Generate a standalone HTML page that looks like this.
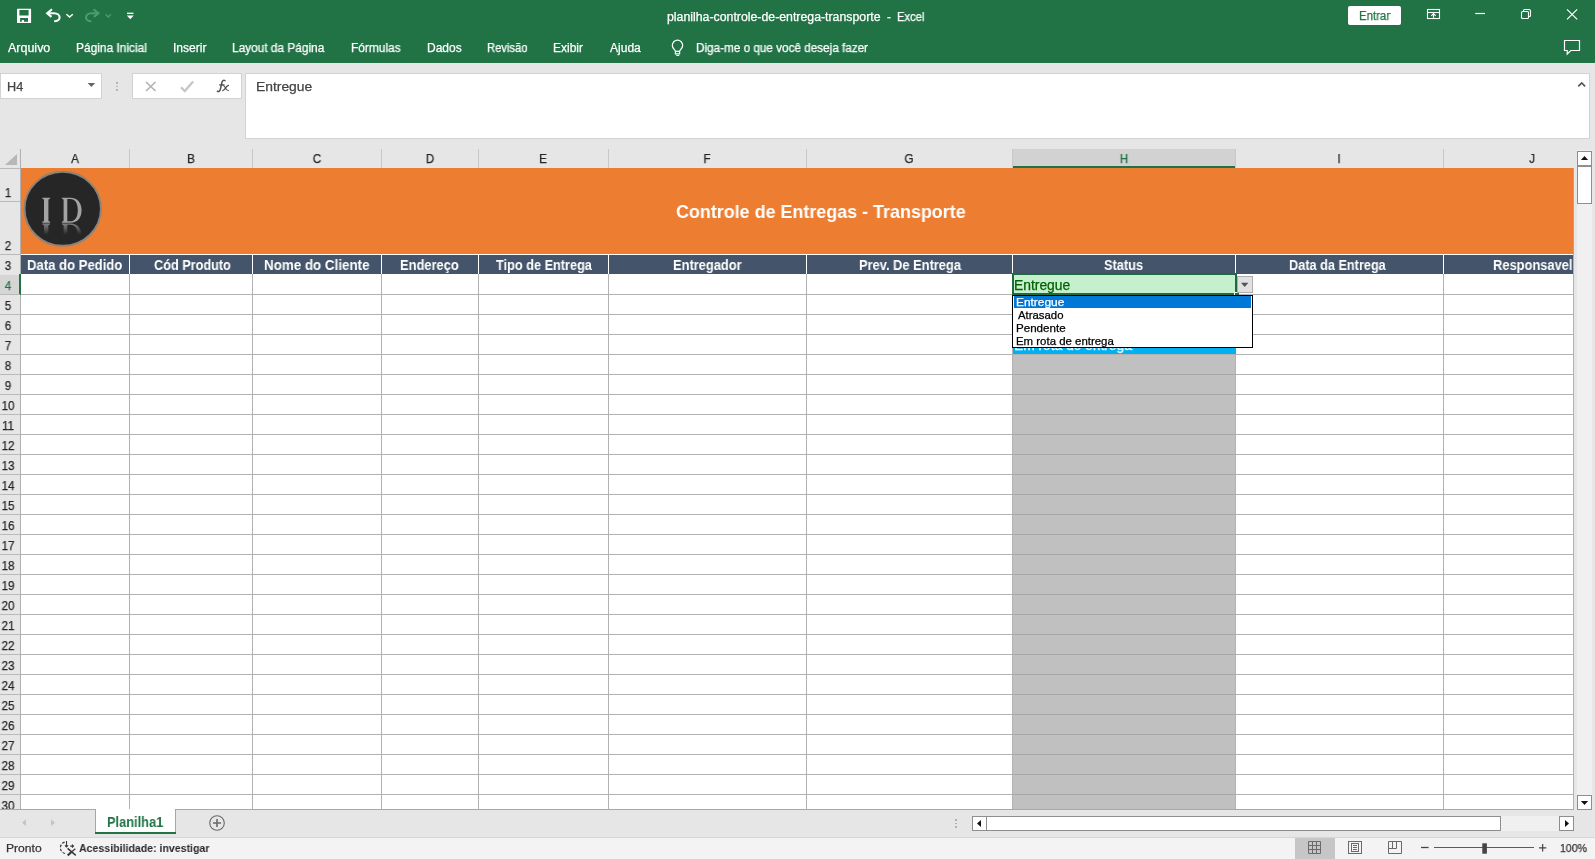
<!DOCTYPE html>
<html><head><meta charset="utf-8"><title>Excel</title>
<style>
*{box-sizing:border-box;margin:0;padding:0}
html,body{width:1595px;height:859px;overflow:hidden;background:#e6e6e6;font-family:"Liberation Sans",sans-serif;}
.a{position:absolute}
.t{position:absolute;white-space:pre;line-height:1;transform-origin:0 0;will-change:transform;-webkit-text-stroke:.25px currentColor}
svg{position:absolute;overflow:visible}
</style></head><body>
<div class="a" style="left:0;top:0;width:1595px;height:63px;background:#217346"></div>

<div class="t" style="left:666.5px;top:10px;line-height:14px;font-size:12px;color:#fff;transform:scaleX(1.026)">planilha-controle-de-entrega-transporte</div>
<div class="t" style="left:886.6px;top:10px;line-height:14px;font-size:12px;color:#fff;transform:scaleX(0.950)">-</div>
<div class="t" style="left:896.6px;top:10px;line-height:14px;font-size:12px;color:#fff;transform:scaleX(0.936)">Excel</div>
<div class="a" style="left:1348px;top:6px;width:53px;height:19px;background:#fff;border-radius:2px"></div>
<div class="t" style="left:1358.5px;top:9px;line-height:14px;font-size:12.3px;color:#217346;transform:scaleX(0.927)">Entrar</div>
<svg style="left:0;top:0" width="160" height="32" viewBox="0 0 160 32" fill="none" stroke="#fff" stroke-width="1.5">
<path d="M17.500 8.700h13.100a.500 .500 0 0 1 .500 .500v13.400a.500 .500 0 0 1-.500 .500h-13.100a.500 .500 0 0 1-.500-.500v-13.400a.500 .500 0 0 1 .500-.500z M19.400 10.100v5.500h9.200v-5.500z M20.100 18v3.800h1.700v-1.800h2.200v1.800h4v-3.800z" fill="#fff" fill-rule="evenodd" stroke="none"/>
<path d="M47.500 13.200h6.500c3.500 0 5.600 2 5.600 4.200s-2.200 3.800-5.400 3.800" stroke-width="2.100"/><path d="M52 9.200l-4.800 4 4.300 3.700" stroke-width="2.100" stroke-linejoin="miter"/>
<path d="M66.400 14.200l3.200 2.900 3.200-2.900" stroke-width="1.500"/>
<g stroke="#4f9a6f"><path d="M98 13.200h-6.500c-3.500 0-5.500 2-5.500 4.200s2.200 3.800 5.300 3.800" stroke-width="2.100"/><path d="M93.500 9.200l4.800 4-4.300 3.700" stroke-width="2.100"/>
<path d="M105.5 14.3l2.7 2.7 2.7-2.7" stroke-width="1.3"/></g>
<path d="M127 13.3h6.5" stroke-width="1.3"/><path d="M126.8 15.6h7l-3.5 3.6z" fill="#fff" stroke="none"/>
</svg>
<svg style="left:1420px;top:0" width="175" height="63" viewBox="1420 0 175 63" fill="none" stroke="#fff" stroke-width="1.100">
<rect x="1427.500" y="9.500" width="12" height="9"/><path d="M1427.500 12.500h12"/><path d="M1433.500 17.800v-4M1431.300 15.800l2.200-2.200 2.200 2.200"/>
<path d="M1475.200 13.500h9.800" stroke-width="1.200"/>
<rect x="1521.500" y="11.500" width="7" height="7" rx="1"/><path d="M1523.500 11.300v-.800a1 1 0 0 1 1-1h4.500a1.500 1.500 0 0 1 1.500 1.500v4.500a1 1 0 0 1-1 1h-.800"/>
<path d="M1567 9.400l10.200 10M1577.200 9.400l-10.200 10" stroke-width="1.200"/>
<path d="M1564.500 40.500h15v10h-8.700l-3.600 3.500v-3.500h-2.700z" stroke-width="1.200"/>
</svg>
<div class="t" style="left:8.0px;top:41px;line-height:14px;font-size:12px;color:#fff;transform:scaleX(1.040)">Arquivo</div>
<div class="t" style="left:76.0px;top:41px;line-height:14px;font-size:12px;color:#fff;transform:scaleX(0.993)">Página Inicial</div>
<div class="t" style="left:173.0px;top:41px;line-height:14px;font-size:12px;color:#fff;transform:scaleX(1.006)">Inserir</div>
<div class="t" style="left:232.2px;top:41px;line-height:14px;font-size:12px;color:#fff;transform:scaleX(0.988)">Layout da Página</div>
<div class="t" style="left:350.6px;top:41px;line-height:14px;font-size:12px;color:#fff;transform:scaleX(0.992)">Fórmulas</div>
<div class="t" style="left:426.5px;top:41px;line-height:14px;font-size:12px;color:#fff;transform:scaleX(0.997)">Dados</div>
<div class="t" style="left:486.5px;top:41px;line-height:14px;font-size:12px;color:#fff;transform:scaleX(0.933)">Revisão</div>
<div class="t" style="left:553.3px;top:41px;line-height:14px;font-size:12px;color:#fff;transform:scaleX(0.997)">Exibir</div>
<div class="t" style="left:610.0px;top:41px;line-height:14px;font-size:12px;color:#fff;transform:scaleX(1.003)">Ajuda</div>
<div class="t" style="left:696.2px;top:41px;line-height:14px;font-size:12px;color:#fff;transform:scaleX(0.977)">Diga-me o que você deseja fazer</div>
<svg style="left:665px;top:36px" width="24" height="24" viewBox="665 36 24 24" fill="none" stroke="#fff" stroke-width="1.1">
<path d="M675.400 51.300c0-1.600-3.100-2.900-3.100-5.900a5.200 5.200 0 0 1 10.400 0c0 3-3.100 4.300-3.100 5.900z" stroke-width="1.200"/><path d="M675.400 51.300v2.500h4.200v-2.500M676.300 55.500h2.900" stroke-width="1.200"/>
</svg>
<div class="a" style="left:0;top:73px;width:102px;height:26px;background:#fff;border:1px solid #d2d2d2"></div>
<div class="t" style="left:6.6px;top:80px;line-height:14px;font-size:12.6px;color:#444;transform:scaleX(1.007)">H4</div>
<svg style="left:87px;top:82px" width="9" height="6" viewBox="0 0 9 6"><path d="M0.600 1h7.600l-3.800 4z" fill="#666"/></svg>
<div class="a" style="left:116.300px;top:82px;width:1.5px;height:1.5px;background:#b5b5b5"></div>
<div class="a" style="left:116.300px;top:85.5px;width:1.5px;height:1.5px;background:#b5b5b5"></div>
<div class="a" style="left:116.300px;top:89px;width:1.5px;height:1.5px;background:#b5b5b5"></div>
<div class="a" style="left:132px;top:73px;width:110px;height:26px;background:#fff;border:1px solid #d2d2d2"></div>
<svg style="left:132px;top:73px" width="110" height="26" viewBox="132 73 110 26" fill="none">
<path d="M146 82l9.500 9M155.500 82l-9.500 9" stroke="#b4b4b4" stroke-width="1.700"/>
<path d="M181 87.300l3.800 3.700 8.300-9.500" stroke="#c6c6c6" stroke-width="2.300"/>
</svg>
<svg style="left:214px;top:76px" width="18" height="20" viewBox="214 76 18 20" fill="none" stroke="#505050" stroke-linecap="round">
<path d="M217.400 91.200c1.600 .700 2.600-.300 3-2.100l1.500-6.600c.4-1.800 1.500-2.600 3.100-1.900" stroke-width="1.500"/><path d="M219.700 84.900h4.300" stroke-width="1.300"/>
<path d="M223 85.500c1.200-.100 1.800 1.100 2.500 2.500s1.400 2.600 2.800 2.500M228.500 85.300c-1.300 .200-2.100 1.300-2.900 2.600s-1.600 2.500-2.900 2.700" stroke-width="1.200"/></svg>
<div class="a" style="left:245px;top:73px;width:1345px;height:66px;background:#fff;border:1px solid #d2d2d2"></div>
<div class="t" style="left:256.3px;top:80px;line-height:14px;font-size:12.6px;color:#444;transform:scaleX(1.100)">Entregue</div>
<svg style="left:1577px;top:80px" width="10" height="8" viewBox="0 0 10 8"><path d="M1.300 6.300l3.400-3.400 3.400 3.400" fill="none" stroke="#555" stroke-width="1.700"/></svg>
<div class="a" style="left:21px;top:168px;width:1553px;height:641px;background:#fff"></div>
<svg style="left:0;top:148px" width="21" height="20" viewBox="0 0 21 20"><path d="M17 6v11h-12z" fill="#b7b7b7"/></svg>
<div class="t" style="left:74.7px;top:152px;line-height:14px;font-size:12.5px;color:#262626;transform-origin:50% 0;transform:translateX(-50%) scaleX(0.93)">A</div>
<div class="a" style="left:129px;top:149px;width:1px;height:19px;background:#c8c8c8"></div>
<div class="t" style="left:190.7px;top:152px;line-height:14px;font-size:12.5px;color:#262626;transform-origin:50% 0;transform:translateX(-50%) scaleX(0.93)">B</div>
<div class="a" style="left:252px;top:149px;width:1px;height:19px;background:#c8c8c8"></div>
<div class="t" style="left:316.7px;top:152px;line-height:14px;font-size:12.5px;color:#262626;transform-origin:50% 0;transform:translateX(-50%) scaleX(0.93)">C</div>
<div class="a" style="left:381px;top:149px;width:1px;height:19px;background:#c8c8c8"></div>
<div class="t" style="left:429.7px;top:152px;line-height:14px;font-size:12.5px;color:#262626;transform-origin:50% 0;transform:translateX(-50%) scaleX(0.93)">D</div>
<div class="a" style="left:478px;top:149px;width:1px;height:19px;background:#c8c8c8"></div>
<div class="t" style="left:543.2px;top:152px;line-height:14px;font-size:12.5px;color:#262626;transform-origin:50% 0;transform:translateX(-50%) scaleX(0.93)">E</div>
<div class="a" style="left:608px;top:149px;width:1px;height:19px;background:#c8c8c8"></div>
<div class="t" style="left:707.2px;top:152px;line-height:14px;font-size:12.5px;color:#262626;transform-origin:50% 0;transform:translateX(-50%) scaleX(0.93)">F</div>
<div class="a" style="left:806px;top:149px;width:1px;height:19px;background:#c8c8c8"></div>
<div class="t" style="left:909.2px;top:152px;line-height:14px;font-size:12.5px;color:#262626;transform-origin:50% 0;transform:translateX(-50%) scaleX(0.93)">G</div>
<div class="a" style="left:1012px;top:149px;width:1px;height:19px;background:#c8c8c8"></div>
<div class="a" style="left:1013px;top:149px;width:223px;height:19px;background:#d2d2d2;border-bottom:2px solid #217346"></div>
<div class="t" style="left:1123.7px;top:152px;line-height:14px;font-size:12.5px;color:#217346;transform-origin:50% 0;transform:translateX(-50%) scaleX(0.93)">H</div>
<div class="a" style="left:1235px;top:149px;width:1px;height:19px;background:#c8c8c8"></div>
<div class="t" style="left:1339.2px;top:152px;line-height:14px;font-size:12.5px;color:#262626;transform-origin:50% 0;transform:translateX(-50%) scaleX(0.93)">I</div>
<div class="a" style="left:1443px;top:149px;width:1px;height:19px;background:#c8c8c8"></div>
<div class="t" style="left:1532.2px;top:152px;line-height:14px;font-size:12.5px;color:#262626;transform-origin:50% 0;transform:translateX(-50%) scaleX(0.93)">J</div>
<div class="a" style="left:20px;top:149px;width:1px;height:660px;background:#b0b0b0"></div>
<div class="a" style="left:21px;top:168px;width:1553px;height:86px;background:#ed7d31"></div>
<div class="t" style="left:676.0px;top:201px;line-height:21px;font-size:18.4px;color:#fff;font-weight:bold;-webkit-text-stroke:0;transform:scaleX(0.974)">Controle de Entregas - Transporte</div>
<svg style="left:20px;top:168px" width="90" height="86" viewBox="20 168 90 86">
<defs><linearGradient id="rf" x1="0" y1="0" x2="0" y2="1"><stop offset="0" stop-color="#9a9a9a" stop-opacity="0"/><stop offset=".55" stop-color="#9a9a9a" stop-opacity="0"/><stop offset="1" stop-color="#9a9a9a" stop-opacity=".8"/></linearGradient></defs>
<ellipse cx="62.700" cy="208.800" rx="38.200" ry="37" fill="#262626" stroke="#8a837c" stroke-width="2"/>
<path d="M42.300 197.700h7.800v1.100c-1.300 .100-1.700 .500-1.700 1.600v19.600c0 1.100 .400 1.500 1.700 1.600v1.100h-7.800v-1.100c1.300-.100 1.700-.500 1.700-1.600v-19.600c0-1.100-.400-1.500-1.700-1.600z M61.900 197.700h8.600c7.200 0 11.100 5.300 11.100 12.500s-3.900 12.500-11.100 12.500h-8.600v-1.100c1.300-.100 1.700-.500 1.700-1.600v-19.600c0-1.100-.400-1.500-1.700-1.600z M67.300 199.100v22.200h3c5 0 7.500-4.500 7.500-11.100s-2.500-11.100-7.500-11.100z" fill="#a3a3a3" fill-rule="evenodd"/>
<path d="M42.300 197.700h7.800v1.100c-1.300 .100-1.700 .500-1.700 1.600v19.600c0 1.100 .400 1.500 1.700 1.600v1.100h-7.800v-1.100c1.300-.100 1.700-.500 1.700-1.600v-19.600c0-1.100-.400-1.500-1.700-1.600z M61.900 197.700h8.600c7.200 0 11.100 5.300 11.100 12.500s-3.900 12.500-11.100 12.500h-8.600v-1.100c1.300-.100 1.700-.500 1.700-1.600v-19.600c0-1.100-.400-1.500-1.700-1.600z M67.300 199.100v22.200h3c5 0 7.500-4.500 7.500-11.100s-2.500-11.100-7.500-11.100z" fill="url(#rf)" fill-rule="evenodd" transform="translate(0,223.400) scale(1,-1) translate(0,-222.700)"/>
</svg>
<div class="a" style="left:21px;top:254px;width:1553px;height:1px;background:#fff"></div>
<div class="a" style="left:21px;top:255px;width:1553px;height:19px;background:#44546a"></div>
<div class="t" style="left:27.4px;top:258px;line-height:15px;font-size:13.8px;color:#fff;font-weight:bold;-webkit-text-stroke:0;transform:scaleX(0.949)">Data do Pedido</div>
<div class="t" style="left:153.6px;top:258px;line-height:15px;font-size:13.8px;color:#fff;font-weight:bold;-webkit-text-stroke:0;transform:scaleX(0.920)">Cód Produto</div>
<div class="t" style="left:264.3px;top:258px;line-height:15px;font-size:13.8px;color:#fff;font-weight:bold;-webkit-text-stroke:0;transform:scaleX(0.969)">Nome do Cliente</div>
<div class="t" style="left:400.2px;top:258px;line-height:15px;font-size:13.8px;color:#fff;font-weight:bold;-webkit-text-stroke:0;transform:scaleX(0.934)">Endereço</div>
<div class="t" style="left:496.0px;top:258px;line-height:15px;font-size:13.8px;color:#fff;font-weight:bold;-webkit-text-stroke:0;transform:scaleX(0.922)">Tipo de Entrega</div>
<div class="t" style="left:673.2px;top:258px;line-height:15px;font-size:13.8px;color:#fff;font-weight:bold;-webkit-text-stroke:0;transform:scaleX(0.933)">Entregador</div>
<div class="t" style="left:858.7px;top:258px;line-height:15px;font-size:13.8px;color:#fff;font-weight:bold;-webkit-text-stroke:0;transform:scaleX(0.932)">Prev. De Entrega</div>
<div class="t" style="left:1104.0px;top:258px;line-height:15px;font-size:13.8px;color:#fff;font-weight:bold;-webkit-text-stroke:0;transform:scaleX(0.927)">Status</div>
<div class="t" style="left:1289.4px;top:258px;line-height:15px;font-size:13.8px;color:#fff;font-weight:bold;-webkit-text-stroke:0;transform:scaleX(0.921)">Data da Entrega</div>
<div class="t" style="left:1493.3px;top:258px;line-height:15px;font-size:13.8px;color:#fff;font-weight:bold;-webkit-text-stroke:0;transform:scaleX(0.934)">Responsavel</div>
<div class="a" style="left:129px;top:254px;width:1px;height:20px;background:#fff"></div>
<div class="a" style="left:252px;top:254px;width:1px;height:20px;background:#fff"></div>
<div class="a" style="left:381px;top:254px;width:1px;height:20px;background:#fff"></div>
<div class="a" style="left:478px;top:254px;width:1px;height:20px;background:#fff"></div>
<div class="a" style="left:608px;top:254px;width:1px;height:20px;background:#fff"></div>
<div class="a" style="left:806px;top:254px;width:1px;height:20px;background:#fff"></div>
<div class="a" style="left:1012px;top:254px;width:1px;height:20px;background:#fff"></div>
<div class="a" style="left:1235px;top:254px;width:1px;height:20px;background:#fff"></div>
<div class="a" style="left:1443px;top:254px;width:1px;height:20px;background:#fff"></div>
<div class="a" style="left:1013px;top:354px;width:223px;height:455px;background:#c0c0c0"></div>
<div class="a" style="left:21px;top:294px;width:1553px;height:1px;background:#b2b2b2"></div>
<div class="a" style="left:21px;top:314px;width:1553px;height:1px;background:#b2b2b2"></div>
<div class="a" style="left:21px;top:334px;width:1553px;height:1px;background:#b2b2b2"></div>
<div class="a" style="left:21px;top:354px;width:1553px;height:1px;background:#b2b2b2"></div>
<div class="a" style="left:21px;top:374px;width:1553px;height:1px;background:#b2b2b2"></div>
<div class="a" style="left:21px;top:394px;width:1553px;height:1px;background:#b2b2b2"></div>
<div class="a" style="left:21px;top:414px;width:1553px;height:1px;background:#b2b2b2"></div>
<div class="a" style="left:21px;top:434px;width:1553px;height:1px;background:#b2b2b2"></div>
<div class="a" style="left:21px;top:454px;width:1553px;height:1px;background:#b2b2b2"></div>
<div class="a" style="left:21px;top:474px;width:1553px;height:1px;background:#b2b2b2"></div>
<div class="a" style="left:21px;top:494px;width:1553px;height:1px;background:#b2b2b2"></div>
<div class="a" style="left:21px;top:514px;width:1553px;height:1px;background:#b2b2b2"></div>
<div class="a" style="left:21px;top:534px;width:1553px;height:1px;background:#b2b2b2"></div>
<div class="a" style="left:21px;top:554px;width:1553px;height:1px;background:#b2b2b2"></div>
<div class="a" style="left:21px;top:574px;width:1553px;height:1px;background:#b2b2b2"></div>
<div class="a" style="left:21px;top:594px;width:1553px;height:1px;background:#b2b2b2"></div>
<div class="a" style="left:21px;top:614px;width:1553px;height:1px;background:#b2b2b2"></div>
<div class="a" style="left:21px;top:634px;width:1553px;height:1px;background:#b2b2b2"></div>
<div class="a" style="left:21px;top:654px;width:1553px;height:1px;background:#b2b2b2"></div>
<div class="a" style="left:21px;top:674px;width:1553px;height:1px;background:#b2b2b2"></div>
<div class="a" style="left:21px;top:694px;width:1553px;height:1px;background:#b2b2b2"></div>
<div class="a" style="left:21px;top:714px;width:1553px;height:1px;background:#b2b2b2"></div>
<div class="a" style="left:21px;top:734px;width:1553px;height:1px;background:#b2b2b2"></div>
<div class="a" style="left:21px;top:754px;width:1553px;height:1px;background:#b2b2b2"></div>
<div class="a" style="left:21px;top:774px;width:1553px;height:1px;background:#b2b2b2"></div>
<div class="a" style="left:21px;top:794px;width:1553px;height:1px;background:#b2b2b2"></div>
<div class="a" style="left:1013px;top:374px;width:223px;height:1px;background:#a6a6a6"></div>
<div class="a" style="left:1013px;top:394px;width:223px;height:1px;background:#a6a6a6"></div>
<div class="a" style="left:1013px;top:414px;width:223px;height:1px;background:#a6a6a6"></div>
<div class="a" style="left:1013px;top:434px;width:223px;height:1px;background:#a6a6a6"></div>
<div class="a" style="left:1013px;top:454px;width:223px;height:1px;background:#a6a6a6"></div>
<div class="a" style="left:1013px;top:474px;width:223px;height:1px;background:#a6a6a6"></div>
<div class="a" style="left:1013px;top:494px;width:223px;height:1px;background:#a6a6a6"></div>
<div class="a" style="left:1013px;top:514px;width:223px;height:1px;background:#a6a6a6"></div>
<div class="a" style="left:1013px;top:534px;width:223px;height:1px;background:#a6a6a6"></div>
<div class="a" style="left:1013px;top:554px;width:223px;height:1px;background:#a6a6a6"></div>
<div class="a" style="left:1013px;top:574px;width:223px;height:1px;background:#a6a6a6"></div>
<div class="a" style="left:1013px;top:594px;width:223px;height:1px;background:#a6a6a6"></div>
<div class="a" style="left:1013px;top:614px;width:223px;height:1px;background:#a6a6a6"></div>
<div class="a" style="left:1013px;top:634px;width:223px;height:1px;background:#a6a6a6"></div>
<div class="a" style="left:1013px;top:654px;width:223px;height:1px;background:#a6a6a6"></div>
<div class="a" style="left:1013px;top:674px;width:223px;height:1px;background:#a6a6a6"></div>
<div class="a" style="left:1013px;top:694px;width:223px;height:1px;background:#a6a6a6"></div>
<div class="a" style="left:1013px;top:714px;width:223px;height:1px;background:#a6a6a6"></div>
<div class="a" style="left:1013px;top:734px;width:223px;height:1px;background:#a6a6a6"></div>
<div class="a" style="left:1013px;top:754px;width:223px;height:1px;background:#a6a6a6"></div>
<div class="a" style="left:1013px;top:774px;width:223px;height:1px;background:#a6a6a6"></div>
<div class="a" style="left:1013px;top:794px;width:223px;height:1px;background:#a6a6a6"></div>
<div class="a" style="left:129px;top:274px;width:1px;height:535px;background:#b2b2b2"></div>
<div class="a" style="left:252px;top:274px;width:1px;height:535px;background:#b2b2b2"></div>
<div class="a" style="left:381px;top:274px;width:1px;height:535px;background:#b2b2b2"></div>
<div class="a" style="left:478px;top:274px;width:1px;height:535px;background:#b2b2b2"></div>
<div class="a" style="left:608px;top:274px;width:1px;height:535px;background:#b2b2b2"></div>
<div class="a" style="left:806px;top:274px;width:1px;height:535px;background:#b2b2b2"></div>
<div class="a" style="left:1012px;top:274px;width:1px;height:535px;background:#b2b2b2"></div>
<div class="a" style="left:1235px;top:274px;width:1px;height:535px;background:#b2b2b2"></div>
<div class="a" style="left:1443px;top:274px;width:1px;height:535px;background:#b2b2b2"></div>
<div class="a" style="left:1573px;top:168px;width:1px;height:641px;background:#b9a090"></div>
<div class="a" style="left:1573px;top:254px;width:1px;height:555px;background:#b2b2b2"></div>
<div class="a" style="left:0;top:201px;width:20px;height:1px;background:#b9b9b9"></div>
<div class="a" style="left:0;top:254px;width:20px;height:1px;background:#b9b9b9"></div>
<div class="a" style="left:0;top:168px;width:20px;height:1px;background:#b9b9b9"></div>
<div class="a" style="left:0;top:275px;width:19px;height:19px;background:#d5d5d5"></div><div class="a" style="left:19px;top:274px;width:2px;height:21px;background:#217346"></div>
<div class="t" style="left:7.6px;top:186px;line-height:14px;font-size:12.5px;color:#262626;transform-origin:50% 0;transform:translateX(-50%) scaleX(0.92)">1</div>
<div class="t" style="left:7.6px;top:239px;line-height:14px;font-size:12.5px;color:#262626;transform-origin:50% 0;transform:translateX(-50%) scaleX(0.92)">2</div>
<div class="t" style="left:7.6px;top:259px;line-height:14px;font-size:12.5px;color:#262626;transform-origin:50% 0;transform:translateX(-50%) scaleX(0.92)">3</div>
<div class="t" style="left:7.6px;top:279px;line-height:14px;font-size:12.5px;color:#217346;transform-origin:50% 0;transform:translateX(-50%) scaleX(0.92)">4</div>
<div class="t" style="left:7.6px;top:299px;line-height:14px;font-size:12.5px;color:#262626;transform-origin:50% 0;transform:translateX(-50%) scaleX(0.92)">5</div>
<div class="a" style="left:0;top:294px;width:20px;height:1px;background:#b9b9b9"></div>
<div class="t" style="left:7.6px;top:319px;line-height:14px;font-size:12.5px;color:#262626;transform-origin:50% 0;transform:translateX(-50%) scaleX(0.92)">6</div>
<div class="a" style="left:0;top:314px;width:20px;height:1px;background:#b9b9b9"></div>
<div class="t" style="left:7.6px;top:339px;line-height:14px;font-size:12.5px;color:#262626;transform-origin:50% 0;transform:translateX(-50%) scaleX(0.92)">7</div>
<div class="a" style="left:0;top:334px;width:20px;height:1px;background:#b9b9b9"></div>
<div class="t" style="left:7.6px;top:359px;line-height:14px;font-size:12.5px;color:#262626;transform-origin:50% 0;transform:translateX(-50%) scaleX(0.92)">8</div>
<div class="a" style="left:0;top:354px;width:20px;height:1px;background:#b9b9b9"></div>
<div class="t" style="left:7.6px;top:379px;line-height:14px;font-size:12.5px;color:#262626;transform-origin:50% 0;transform:translateX(-50%) scaleX(0.92)">9</div>
<div class="a" style="left:0;top:374px;width:20px;height:1px;background:#b9b9b9"></div>
<div class="t" style="left:8.4px;top:399px;line-height:14px;font-size:12.5px;color:#262626;transform-origin:50% 0;transform:translateX(-50%) scaleX(0.92)">10</div>
<div class="a" style="left:0;top:394px;width:20px;height:1px;background:#b9b9b9"></div>
<div class="t" style="left:8.4px;top:419px;line-height:14px;font-size:12.5px;color:#262626;transform-origin:50% 0;transform:translateX(-50%) scaleX(0.92)">11</div>
<div class="a" style="left:0;top:414px;width:20px;height:1px;background:#b9b9b9"></div>
<div class="t" style="left:8.4px;top:439px;line-height:14px;font-size:12.5px;color:#262626;transform-origin:50% 0;transform:translateX(-50%) scaleX(0.92)">12</div>
<div class="a" style="left:0;top:434px;width:20px;height:1px;background:#b9b9b9"></div>
<div class="t" style="left:8.4px;top:459px;line-height:14px;font-size:12.5px;color:#262626;transform-origin:50% 0;transform:translateX(-50%) scaleX(0.92)">13</div>
<div class="a" style="left:0;top:454px;width:20px;height:1px;background:#b9b9b9"></div>
<div class="t" style="left:8.4px;top:479px;line-height:14px;font-size:12.5px;color:#262626;transform-origin:50% 0;transform:translateX(-50%) scaleX(0.92)">14</div>
<div class="a" style="left:0;top:474px;width:20px;height:1px;background:#b9b9b9"></div>
<div class="t" style="left:8.4px;top:499px;line-height:14px;font-size:12.5px;color:#262626;transform-origin:50% 0;transform:translateX(-50%) scaleX(0.92)">15</div>
<div class="a" style="left:0;top:494px;width:20px;height:1px;background:#b9b9b9"></div>
<div class="t" style="left:8.4px;top:519px;line-height:14px;font-size:12.5px;color:#262626;transform-origin:50% 0;transform:translateX(-50%) scaleX(0.92)">16</div>
<div class="a" style="left:0;top:514px;width:20px;height:1px;background:#b9b9b9"></div>
<div class="t" style="left:8.4px;top:539px;line-height:14px;font-size:12.5px;color:#262626;transform-origin:50% 0;transform:translateX(-50%) scaleX(0.92)">17</div>
<div class="a" style="left:0;top:534px;width:20px;height:1px;background:#b9b9b9"></div>
<div class="t" style="left:8.4px;top:559px;line-height:14px;font-size:12.5px;color:#262626;transform-origin:50% 0;transform:translateX(-50%) scaleX(0.92)">18</div>
<div class="a" style="left:0;top:554px;width:20px;height:1px;background:#b9b9b9"></div>
<div class="t" style="left:8.4px;top:579px;line-height:14px;font-size:12.5px;color:#262626;transform-origin:50% 0;transform:translateX(-50%) scaleX(0.92)">19</div>
<div class="a" style="left:0;top:574px;width:20px;height:1px;background:#b9b9b9"></div>
<div class="t" style="left:8.4px;top:599px;line-height:14px;font-size:12.5px;color:#262626;transform-origin:50% 0;transform:translateX(-50%) scaleX(0.92)">20</div>
<div class="a" style="left:0;top:594px;width:20px;height:1px;background:#b9b9b9"></div>
<div class="t" style="left:8.4px;top:619px;line-height:14px;font-size:12.5px;color:#262626;transform-origin:50% 0;transform:translateX(-50%) scaleX(0.92)">21</div>
<div class="a" style="left:0;top:614px;width:20px;height:1px;background:#b9b9b9"></div>
<div class="t" style="left:8.4px;top:639px;line-height:14px;font-size:12.5px;color:#262626;transform-origin:50% 0;transform:translateX(-50%) scaleX(0.92)">22</div>
<div class="a" style="left:0;top:634px;width:20px;height:1px;background:#b9b9b9"></div>
<div class="t" style="left:8.4px;top:659px;line-height:14px;font-size:12.5px;color:#262626;transform-origin:50% 0;transform:translateX(-50%) scaleX(0.92)">23</div>
<div class="a" style="left:0;top:654px;width:20px;height:1px;background:#b9b9b9"></div>
<div class="t" style="left:8.4px;top:679px;line-height:14px;font-size:12.5px;color:#262626;transform-origin:50% 0;transform:translateX(-50%) scaleX(0.92)">24</div>
<div class="a" style="left:0;top:674px;width:20px;height:1px;background:#b9b9b9"></div>
<div class="t" style="left:8.4px;top:699px;line-height:14px;font-size:12.5px;color:#262626;transform-origin:50% 0;transform:translateX(-50%) scaleX(0.92)">25</div>
<div class="a" style="left:0;top:694px;width:20px;height:1px;background:#b9b9b9"></div>
<div class="t" style="left:8.4px;top:719px;line-height:14px;font-size:12.5px;color:#262626;transform-origin:50% 0;transform:translateX(-50%) scaleX(0.92)">26</div>
<div class="a" style="left:0;top:714px;width:20px;height:1px;background:#b9b9b9"></div>
<div class="t" style="left:8.4px;top:739px;line-height:14px;font-size:12.5px;color:#262626;transform-origin:50% 0;transform:translateX(-50%) scaleX(0.92)">27</div>
<div class="a" style="left:0;top:734px;width:20px;height:1px;background:#b9b9b9"></div>
<div class="t" style="left:8.4px;top:759px;line-height:14px;font-size:12.5px;color:#262626;transform-origin:50% 0;transform:translateX(-50%) scaleX(0.92)">28</div>
<div class="a" style="left:0;top:754px;width:20px;height:1px;background:#b9b9b9"></div>
<div class="t" style="left:8.4px;top:779px;line-height:14px;font-size:12.5px;color:#262626;transform-origin:50% 0;transform:translateX(-50%) scaleX(0.92)">29</div>
<div class="a" style="left:0;top:774px;width:20px;height:1px;background:#b9b9b9"></div>
<div class="t" style="left:8.4px;top:799px;line-height:14px;font-size:12.5px;color:#262626;transform-origin:50% 0;transform:translateX(-50%) scaleX(0.92)">30</div>
<div class="a" style="left:0;top:794px;width:20px;height:1px;background:#b9b9b9"></div>
<div class="a" style="left:1012px;top:273px;width:225px;height:22px;background:#c6efce;border:2px solid #1e6b41"></div>
<div class="a" style="left:1234px;top:292px;width:5px;height:5px;background:#1e6b41;border:1px solid #fff;border-right:none;border-bottom:none"></div>
<div class="t" style="left:1014.3px;top:278px;line-height:15px;font-size:13.8px;color:#006100;transform:scaleX(1.004)">Entregue</div>
<div class="a" style="left:1237px;top:276px;width:16px;height:17px;background:#e1e1e1;border:1px solid #adadad"></div>
<svg style="left:1240px;top:282px" width="10" height="6" viewBox="0 0 10 6"><path d="M1 0.700h7.400l-3.700 4.300z" fill="#555"/></svg>
<div class="a" style="left:1013px;top:335px;width:223px;height:19px;background:#00b0f0;overflow:hidden"></div>
<div class="t" style="left:1014.3px;top:338px;line-height:15px;font-size:13.8px;color:#fff;transform:scaleX(0.997)">Em rota de entrega</div>
<div class="a" style="left:1012px;top:295px;width:241px;height:53px;background:#fff;border:1px solid #000"></div>
<div class="a" style="left:1014px;top:296px;width:237px;height:12px;background:#0078d7"></div>
<div class="t" style="left:1016.4px;top:296px;line-height:12px;font-size:10.8px;color:#fff;transform:scaleX(1.102)">Entregue</div>
<div class="t" style="left:1017.5px;top:309px;line-height:12px;font-size:10.8px;color:#000;transform:scaleX(1.053)">Atrasado</div>
<div class="t" style="left:1016.4px;top:322px;line-height:12px;font-size:10.8px;color:#000;transform:scaleX(1.073)">Pendente</div>
<div class="t" style="left:1016.4px;top:335px;line-height:12px;font-size:10.8px;color:#000;transform:scaleX(1.058)">Em rota de entrega</div>
<div class="a" style="left:1577px;top:150px;width:15px;height:660px;background:#f0f0f0"></div>
<div class="a" style="left:1577px;top:151px;width:15px;height:15px;background:#fff;border:1px solid #8e8e8e"></div>
<svg style="left:1580px;top:155px" width="9" height="6" viewBox="0 0 9 6"><path d="M0.900 5l3.600-4 3.600 4z" fill="#111"/></svg>
<div class="a" style="left:1577px;top:166px;width:15px;height:38px;background:#fff;border:1px solid #8e8e8e"></div>
<div class="a" style="left:0;top:809px;width:1595px;height:28px;background:#e6e6e6"></div>
<div class="a" style="left:0;top:809px;width:1574px;height:1px;background:#a8a8a8"></div>
<div class="a" style="left:95px;top:809px;width:81px;height:23px;background:#fff;border-left:1px solid #a6a6a6;border-right:1px solid #a6a6a6"></div><div class="a" style="left:95px;top:832px;width:81px;height:2px;background:#217346"></div>
<div class="t" style="left:107.0px;top:814px;line-height:16px;font-size:14px;color:#217346;font-weight:bold;-webkit-text-stroke:0;transform:scaleX(0.915)">Planilha1</div>
<svg style="left:0;top:810px" width="240" height="27" viewBox="0 810 240 27" fill="none"><path d="M26 819.300v6.800l-4-3.400z" fill="#c4c4c4"/><path d="M51 819.300v6.800l4-3.400z" fill="#c4c4c4"/><circle cx="217" cy="823" r="7.300" stroke="#6a6a6a" stroke-width="1.100"/><path d="M213 823h8M217 819v8" stroke="#6a6a6a" stroke-width="1.600"/></svg>
<div class="a" style="left:955px;top:819px;width:1.6px;height:1.6px;background:#b0b0b0"></div>
<div class="a" style="left:955px;top:822.5px;width:1.6px;height:1.6px;background:#b0b0b0"></div>
<div class="a" style="left:955px;top:826px;width:1.6px;height:1.6px;background:#b0b0b0"></div>
<div class="a" style="left:1577px;top:795px;width:15px;height:15px;background:#fff;border:1px solid #8e8e8e"></div>
<svg style="left:1580px;top:800px" width="9" height="6" viewBox="0 0 9 6"><path d="M0.900 1l3.600 4 3.600-4z" fill="#111"/></svg>
<div class="a" style="left:972px;top:816px;width:602px;height:15px;background:#f0f0f0"></div>
<div class="a" style="left:972px;top:816px;width:15px;height:15px;background:#fff;border:1px solid #8e8e8e"></div>
<svg style="left:976px;top:819px" width="6" height="9" viewBox="0 0 6 9"><path d="M5 0.900v7.200l-4-3.600z" fill="#111"/></svg>
<div class="a" style="left:986px;top:816px;width:515px;height:15px;background:#fff;border:1px solid #8e8e8e"></div>
<div class="a" style="left:1559px;top:816px;width:15px;height:15px;background:#fff;border:1px solid #8e8e8e"></div>
<svg style="left:1564px;top:819px" width="6" height="9" viewBox="0 0 6 9"><path d="M1 0.900v7.200l4-3.600z" fill="#111"/></svg>
<div class="a" style="left:0;top:837px;width:1595px;height:22px;background:#f3f3f3;border-top:1px solid #d6d6d6"></div>
<div class="t" style="left:6.3px;top:841px;line-height:14px;font-size:11.8px;color:#333;transform:scaleX(1.027)">Pronto</div>
<div class="t" style="left:79.4px;top:841px;line-height:13px;font-size:11.6px;color:#2b2b2b;font-weight:bold;-webkit-text-stroke:0;transform:scaleX(0.912)">Acessibilidade: investigar</div>
<svg style="left:58px;top:838px" width="22" height="21" viewBox="58 838 22 21" fill="none" stroke="#3a3a3a" stroke-width="1.100">
<path d="M64.600 842.100a5.900 5.900 0 0 0 .900 11.500" stroke-dasharray="2.700 1.500" stroke-width="1.200"/>
<path d="M66.500 841v5.600M64.900 845.300l1.600 1.700 1.600-1.700"/><path d="M70.200 846.100h3M72 844.700l1.500 1.400-1.500 1.400"/>
<path d="M67.600 848.400l8.200 7" stroke-width="1.500"/><path d="M75.300 848.700l-3.800 3.300" stroke-width="1.300"/><path d="M71.500 852l-3.800 3.300" stroke-width="2.200"/></svg>
<div class="a" style="left:1295px;top:838px;width:40px;height:21px;background:#c6c6c6"></div>
<svg style="left:1295px;top:838px" width="300" height="21" viewBox="1295 838 300 21" fill="none" stroke="#6a6a6a" stroke-width="1">
<path d="M1308.500 841.500h12v12h-12zM1312.500 841.500v12M1316.500 841.500v12M1308.500 845.500h12M1308.500 849.500h12"/>
<rect x="1348.500" y="841.500" width="13" height="12"/><rect x="1351.500" y="843.500" width="7" height="8"/><path d="M1353 845.500h4M1353 847.500h4M1353 849.500h4"/>
<path d="M1388.500 841.500h13v12h-13zM1388.500 848.500h8v-7M1392.500 841.500v7"/>
<path d="M1421 847.500h7.600" stroke="#444" stroke-width="1.300"/><path d="M1434 847.500h100" stroke="#5a5a5a" stroke-width="1.100"/>
<rect x="1482.300" y="843.300" width="4.600" height="10.400" fill="#444" stroke="none"/>
<path d="M1539 847.800h7.300M1542.650 844.100v7.400" stroke="#444" stroke-width="1.200"/>
</svg>
<div class="t" style="left:1560.2px;top:842px;line-height:12px;font-size:11.4px;color:#333;transform:scaleX(0.925)">100%</div>
</body></html>
